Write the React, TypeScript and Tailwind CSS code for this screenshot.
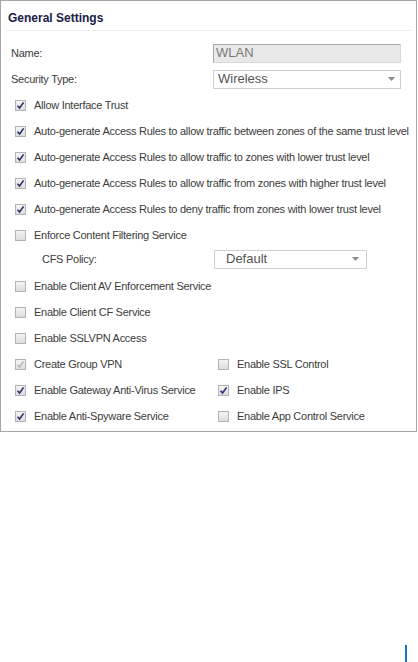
const font = { fontFamily: '"Liberation Sans", Arial, sans-serif' };

const Box = ({ checked, disabled }: { checked?: boolean; disabled?: boolean }) => (
  <span className="flex h-[11px] w-[11px] shrink-0 items-center justify-center border border-[#b4b4b4] bg-gradient-to-b from-[#f4f4f4] to-[#dcdcdc]">
    {checked ? (
      <svg width="9" height="9" viewBox="0 0 9 9">
        <path
          d="M1.5 4.8 L3.6 7 L7.6 1.4"
          fill="none"
          stroke={disabled ? '#b8b8b8' : '#27306b'}
          strokeWidth="1.6"
        />
      </svg>
    ) : null}
  </span>
);

const Check = ({ label, checked, disabled }: { label: string; checked?: boolean; disabled?: boolean }) => (
  <div className="flex h-[26px] items-center gap-[8px]">
    <Box checked={checked} disabled={disabled} />
    <span className="whitespace-nowrap tracking-[-0.27px]">{label}</span>
  </div>
);

const Arrow = () => (
  <svg width="7" height="4" viewBox="0 0 7 4">
    <path d="M0 0 H7 L3.5 4 Z" fill="#8a8a8a" />
  </svg>
);

export default function App() {
  return (
    <div className="h-[662px] w-[418px] bg-white text-[11px] text-[#3c3c3c]" style={font}>
      <div className="h-[432px] w-[417px] border border-[#a6a6a6]">
        <div className="mx-[5px] border-b border-[#ececec] pt-[8px] pb-[3px] pl-[2px] text-[12px] font-bold text-[#1a2046]">
          General Settings
        </div>
        <div className="px-[14px] pt-[9px]">
          <div className="flex h-[26px] items-center">
            <span className="-ml-[4px] mr-[4px] w-[198px] tracking-[-0.27px]">Name:</span>
            <div className="flex h-[19px] w-[188px] items-center border border-[#d8d8d8] border-t-[#a8a8a8] border-l-[#a8a8a8] bg-[#e9e9e9] pl-[2px] text-[13px] text-[#7a7a7a]">
              WLAN
            </div>
          </div>
          <div className="flex h-[26px] items-center">
            <span className="-ml-[4px] mr-[4px] w-[198px] tracking-[-0.27px]">Security Type:</span>
            <div className="flex h-[19px] w-[188px] items-center justify-between border border-[#d0d0d0] pl-[4px] pr-[5px] text-[13px] text-[#555]">
              <span>Wireless</span>
              <Arrow />
            </div>
          </div>
          <Check label="Allow Interface Trust" checked />
          <Check label="Auto-generate Access Rules to allow traffic between zones of the same trust level" checked />
          <Check label="Auto-generate Access Rules to allow traffic to zones with lower trust level" checked />
          <Check label="Auto-generate Access Rules to allow traffic from zones with higher trust level" checked />
          <Check label="Auto-generate Access Rules to deny traffic from zones with lower trust level" checked />
          <Check label="Enforce Content Filtering Service" />
          <div className="flex h-[25px] items-center pb-[3px]">
            <span className="w-[199px] pl-[27px] tracking-[-0.27px]">CFS Policy:</span>
            <div className="flex h-[19px] w-[153px] items-center justify-between border border-[#d0d0d0] pl-[11px] pr-[7px] text-[13px] text-[#555]">
              <span>Default</span>
              <Arrow />
            </div>
          </div>
          <Check label="Enable Client AV Enforcement Service" />
          <Check label="Enable Client CF Service" />
          <Check label="Enable SSLVPN Access" />
          <div className="grid grid-cols-[203px_1fr]">
            <Check label="Create Group VPN" checked disabled />
            <Check label="Enable SSL Control" />
            <Check label="Enable Gateway Anti-Virus Service" checked />
            <Check label="Enable IPS" checked />
            <Check label="Enable Anti-Spyware Service" checked />
            <Check label="Enable App Control Service" />
          </div>
        </div>
      </div>
      <div className="flex justify-end pr-[11px] pt-[213px]">
        <div className="h-[17px] w-[2px] bg-[#1b75bb]" />
      </div>
    </div>
  );
}
